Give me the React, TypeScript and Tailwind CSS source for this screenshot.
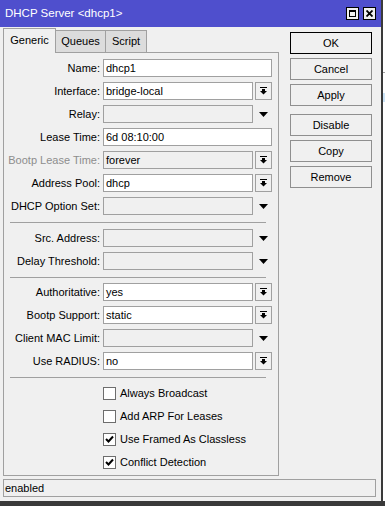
import type { ReactNode } from "react"

type Kind = "text" | "combo" | "disabled"

interface Field {
  label: string
  value?: string
  kind: Kind
  dim?: boolean
}

const general: Field[] = [
  { label: "Name:", value: "dhcp1", kind: "text" },
  { label: "Interface:", value: "bridge-local", kind: "combo" },
  { label: "Relay:", kind: "disabled" },
  { label: "Lease Time:", value: "6d 08:10:00", kind: "text" },
  { label: "Bootp Lease Time:", value: "forever", kind: "combo", dim: true },
  { label: "Address Pool:", value: "dhcp", kind: "combo" },
  { label: "DHCP Option Set:", kind: "disabled" },
]

const source: Field[] = [
  { label: "Src. Address:", kind: "disabled" },
  { label: "Delay Threshold:", kind: "disabled" },
]

const auth: Field[] = [
  { label: "Authoritative:", value: "yes", kind: "combo" },
  { label: "Bootp Support:", value: "static", kind: "combo" },
  { label: "Client MAC Limit:", kind: "disabled" },
  { label: "Use RADIUS:", value: "no", kind: "combo" },
]

const flags = [
  { label: "Always Broadcast", checked: false },
  { label: "Add ARP For Leases", checked: false },
  { label: "Use Framed As Classless", checked: true },
  { label: "Conflict Detection", checked: true },
]

function ComboGlyph() {
  return (
    <svg width="7" height="8" viewBox="0 0 7 8">
      <rect x="0" y="0" width="7" height="1" fill="#000" />
      <rect x="2" y="2" width="3" height="2" fill="#000" />
      <polygon points="0,4 7,4 3.5,7.5" fill="#000" />
    </svg>
  )
}

function DownArrow() {
  return (
    <svg width="9" height="5" viewBox="0 0 9 5">
      <polygon points="0,0 9,0 4.5,5" fill="#000" />
    </svg>
  )
}

function Row({ field }: { field: Field }) {
  const box =
    field.kind === "disabled" || field.dim ? "bg-[#f0f0f0]" : "bg-white"
  return (
    <div className="flex h-[18px] items-center">
      <div className={`w-[96px] text-right ${field.dim ? "text-[#8d8d8d]" : "text-black"}`}>
        {field.label}
      </div>
      <div className={`ml-[3px] flex h-full flex-1 items-center border border-[#a0a0a0] pl-[2px] ${box}`}>
        {field.value}
      </div>
      {field.kind === "combo" && (
        <div className="ml-[2px] flex h-full w-[17px] items-center justify-center border border-[#a0a0a0] bg-[#f0f0f0]">
          <ComboGlyph />
        </div>
      )}
      {field.kind === "disabled" && (
        <div className="ml-[2px] flex h-full w-[17px] items-center justify-center">
          <DownArrow />
        </div>
      )}
    </div>
  )
}

function Separator({ tight }: { tight?: boolean }) {
  return (
    <div className={`mx-[6px] mt-[2px] h-px bg-[#a0a0a0] ${tight ? "mb-0" : "mb-[1px]"}`} />
  )
}

function Check({ checked }: { checked: boolean }) {
  return (
    <div className="flex h-[13px] w-[13px] items-center justify-center border border-[#6d6d6d] bg-white">
      {checked && (
        <svg width="9" height="8" viewBox="0 0 9 8">
          <path d="M1 4 L3.5 6.5 L8 1.5" stroke="#000" strokeWidth="2" fill="none" />
        </svg>
      )}
    </div>
  )
}

function Button({ children, primary }: { children: ReactNode; primary?: boolean }) {
  return (
    <div
      className={`flex h-[22px] items-center justify-center border bg-[#f0f0f0] ${
        primary ? "border-black" : "border-[#8f8f8f]"
      }`}
    >
      {children}
    </div>
  )
}

export default function App() {
  return (
    <div className="flex h-[506px] w-[385px] flex-col bg-[#3a3a3a] font-['Liberation_Sans','Arial',sans-serif] text-[11px] text-black">
      <div className="flex h-[501px]">
        {/* window */}
        <div className="flex w-[383px] flex-col border-r-2 border-[#3a3a3a] bg-[#f0f0f0]">
          <div className="flex h-[27px] items-center justify-between bg-[#4f4fcd] pr-[5px] pl-[5px]">
            <span className="text-[11.5px] text-white">DHCP Server &lt;dhcp1&gt;</span>
            <div className="flex gap-[4px]">
              <div className="flex h-[13px] w-[13px] items-center justify-center border border-black bg-[#f0f0f0]">
                <div className="h-[7px] w-[7px] border border-t-2 border-black" />
              </div>
              <div className="flex h-[13px] w-[13px] items-center justify-center border border-black bg-[#f0f0f0]">
                <svg width="7" height="7" viewBox="0 0 7 7">
                  <path d="M0.5 0.5 L6.5 6.5 M6.5 0.5 L0.5 6.5" stroke="#000" strokeWidth="1.8" />
                </svg>
              </div>
            </div>
          </div>

          <div className="flex flex-1 flex-col">
            <div className="flex flex-1">
              {/* left: tabs + panel */}
              <div className="ml-[3px] flex w-[276px] flex-col">
                <div className="flex h-[25px] items-end pt-[1px]">
                  <div className="relative z-10 -mb-px flex h-[25px] w-[53px] items-center justify-center border border-b-0 border-[#a0a0a0] bg-[#f0f0f0] pb-[2px]">
                    Generic
                  </div>
                  <div className="flex h-[22px] w-[50px] items-center justify-center border border-b-0 border-l-0 border-[#a0a0a0] bg-[#dcdcdc]">
                    Queues
                  </div>
                  <div className="flex h-[22px] w-[41px] items-center justify-center border border-b-0 border-l-0 border-[#a0a0a0] bg-[#dcdcdc]">
                    Script
                  </div>
                </div>
                <div className="flex h-[424px] flex-col gap-[5px] border border-[#a0a0a0] pt-[6px] pr-[6px]">
                  {general.map((f) => (
                    <Row key={f.label} field={f} />
                  ))}
                  <Separator />
                  {source.map((f) => (
                    <Row key={f.label} field={f} />
                  ))}
                  <Separator tight />
                  {auth.map((f) => (
                    <Row key={f.label} field={f} />
                  ))}
                  <Separator />
                  {flags.map((f) => (
                    <div key={f.label} className="flex h-[18px] items-center pl-[99px]">
                      <Check checked={f.checked} />
                      <span className="ml-[4px]">{f.label}</span>
                    </div>
                  ))}
                </div>
              </div>

              {/* right: buttons */}
              <div className="ml-[11px] flex w-[82px] flex-col pt-[5px]">
                <div className="flex flex-col gap-[4px]">
                  <Button primary>OK</Button>
                  <Button>Cancel</Button>
                  <Button>Apply</Button>
                </div>
                <div className="mt-[8px] flex flex-col gap-[4px]">
                  <Button>Disable</Button>
                  <Button>Copy</Button>
                  <Button>Remove</Button>
                </div>
              </div>
            </div>

            <div className="mt-[3px] mr-[5px] mb-[4px] ml-[3px] flex h-[18px] items-center border border-[#a0a0a0] pl-px">
              enabled
            </div>
          </div>
        </div>

        {/* edge of the window behind */}
        <div className="flex w-[2px] flex-col bg-white">
          <div className="h-[72px]" />
          <div className="h-px bg-[#a0a0a0]" />
          <div className="h-[20px]" />
          <div className="h-[9px] bg-[#cce4f7]" />
        </div>
      </div>
    </div>
  )
}
